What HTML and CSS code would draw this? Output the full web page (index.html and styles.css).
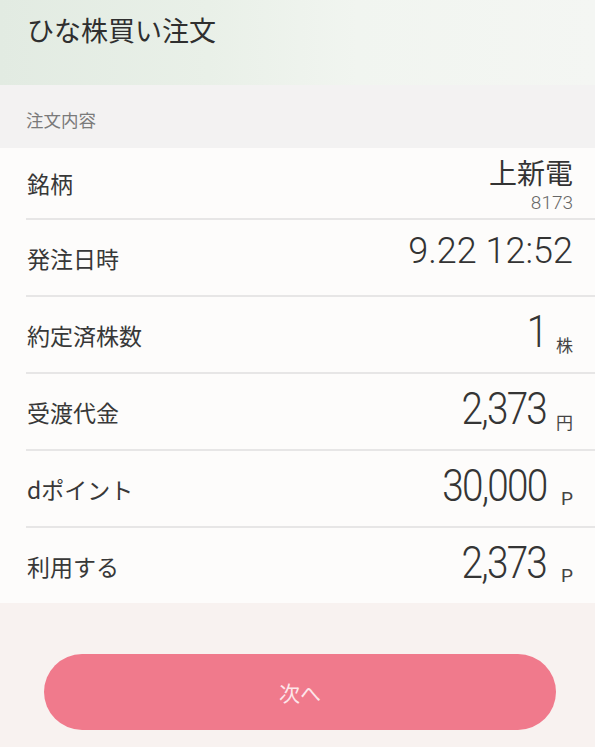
FILE: index.html
```html
<!DOCTYPE html>
<html lang="ja">
<head>
  <meta charset="UTF-8" />
  <title>ひな株買い注文</title>
  <link rel="stylesheet" href="styles.css">
</head>
<body>

<header class="topbar">
  <h1>ひな株買い注文</h1>
</header>

<div class="section-title">注文内容</div>

<div class="order-list">
  <div class="row first">
    <span class="label">銘柄</span>
    <span class="stock">
      <span class="stock-name">上新電</span>
      <span class="stock-code">8173</span>
    </span>
  </div>
  <div class="row">
    <span class="label">発注日時</span>
    <span class="date">9.22 12:52</span>
  </div>
  <div class="row">
    <span class="label">約定済株数</span>
    <span class="value">
      <span class="num">1</span><span class="unit">株</span>
    </span>
  </div>
  <div class="row">
    <span class="label">受渡代金</span>
    <span class="value">
      <span class="num">2,373</span><span class="unit">円</span>
    </span>
  </div>
  <div class="row">
    <span class="label">dポイント</span>
    <span class="value">
      <span class="num">30,000</span><span class="unit latin">P</span>
    </span>
  </div>
  <div class="row">
    <span class="label">利用する</span>
    <span class="value">
      <span class="num">2,373</span><span class="unit latin">P</span>
    </span>
  </div>
</div>

<div class="actions">
  <button class="next-btn">次へ</button>
</div>

</body>
</html>
```

FILE: styles.css
```css
body {
  margin: 0;
  font-family: "Noto Sans CJK JP", "Noto Sans", sans-serif;
  color: #333;
  background: #f8f2f0;
}

.topbar {
  height: 85px;
  box-sizing: border-box;
  padding: 11px 0 0 27px;
  background: linear-gradient(90deg, #e2ebe2 0%, #e9f0e8 35%, #f1f5f0 60%, #f4f6f3 100%);
}

.topbar h1 {
  margin: 0;
  font-size: 27px;
  line-height: 38px;
  font-weight: 400;
  color: #2f2f2f;
}

.section-title {
  height: 63px;
  box-sizing: border-box;
  padding: 24px 0 0 26px;
  font-size: 17.5px;
  line-height: 22px;
  color: #7a7a7a;
  background: #f3f2f2;
}

.order-list {
  background: #fdfcfb;
}

.row {
  height: 77px;
  box-sizing: border-box;
  margin-left: 26px;
  padding: 0 22px 0 1px;
  border-top: 2px solid #e7e6e6;
  display: flex;
  align-items: center;
  justify-content: space-between;
}

.row.first {
  height: 70px;
  border-top: none;
}

.label {
  font-size: 23px;
  color: #383838;
}

.stock {
  display: flex;
  flex-direction: column;
  align-items: flex-end;
}

.stock-name {
  font-size: 28px;
  line-height: 40px;
  color: #333;
}

.stock-code {
  font-family: Roboto, sans-serif;
  font-weight: 300;
  font-size: 19px;
  line-height: 22px;
  color: #666;
}

.date {
  font-family: Roboto, sans-serif;
  font-weight: 300;
  font-size: 36px;
  color: #333;
  margin-bottom: 14px;
}

.value {
  display: flex;
  align-items: flex-end;
  padding-bottom: 6px;
}

.num {
  display: inline-block;
  font-family: Roboto, sans-serif;
  font-weight: 300;
  font-size: 44px;
  line-height: 44px;
  letter-spacing: -2px;
  transform: scaleX(0.88);
  transform-origin: right bottom;
  color: #353535;
}

.unit {
  width: 18px;
  margin-left: 9px;
  text-align: right;
  font-size: 17px;
  line-height: 18px;
  color: #444;
}

.unit.latin {
  font-family: Roboto, sans-serif;
  font-size: 19px;
}

.actions {
  height: 143px;
  box-sizing: border-box;
  padding: 51px 39px 0 44px;
}

.next-btn {
  width: 100%;
  height: 76px;
  border: none;
  border-radius: 38px;
  background: #f07a8c;
  color: #fde6ea;
  font-family: "Noto Sans CJK JP", sans-serif;
  font-size: 21px;
  cursor: pointer;
}
```
